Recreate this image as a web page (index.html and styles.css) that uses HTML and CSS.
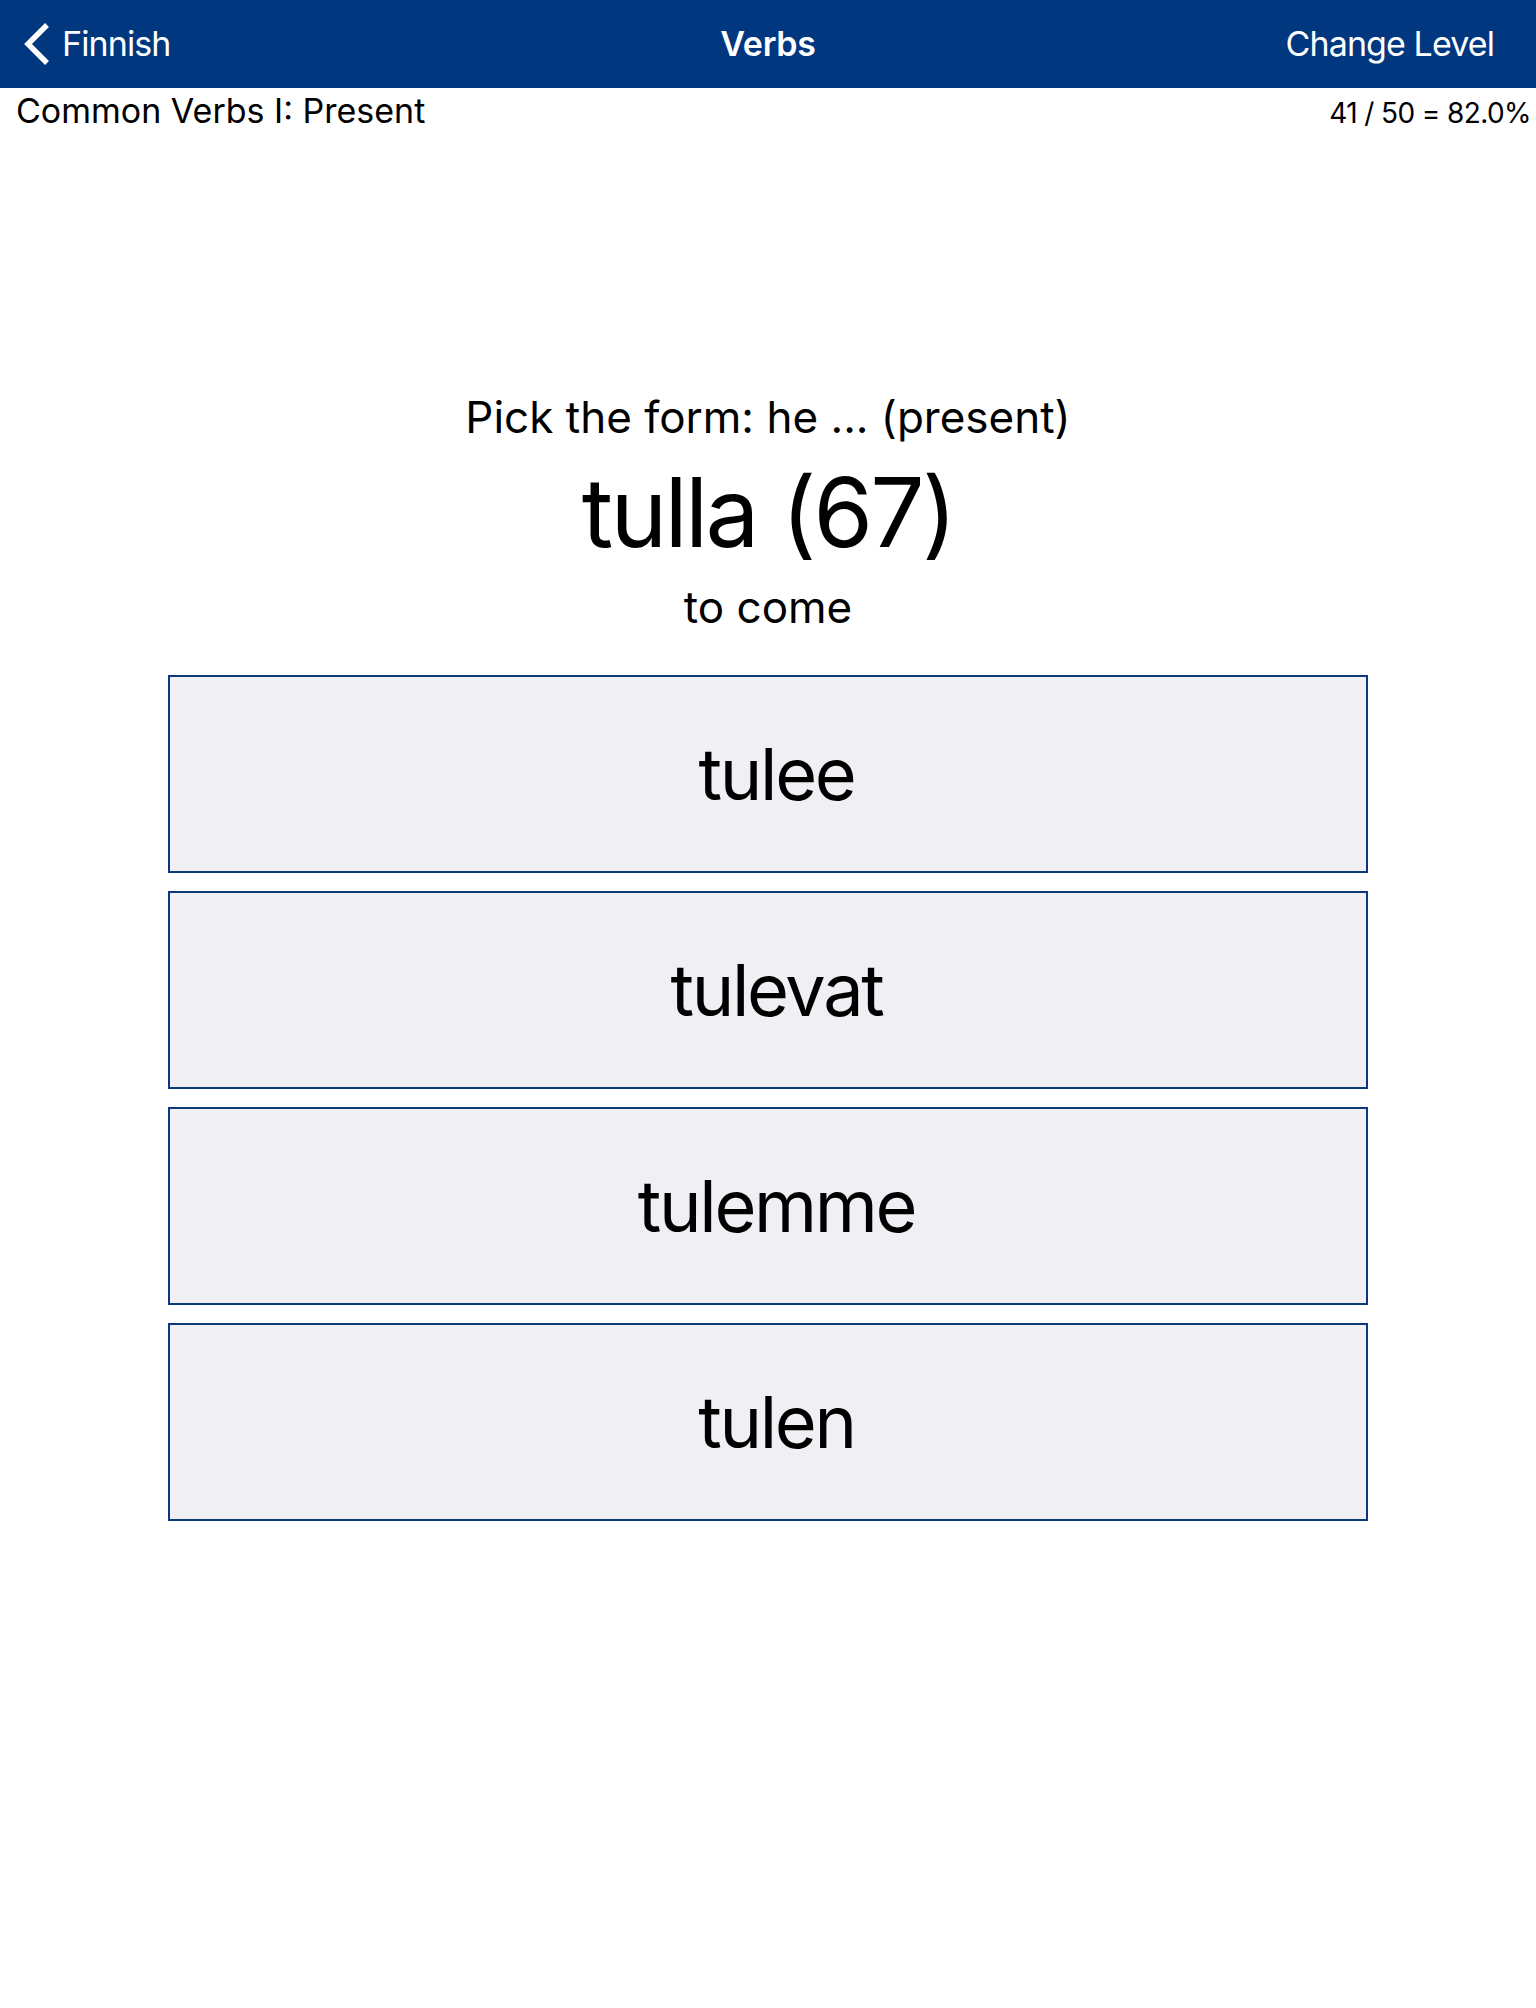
FILE: index.html
```html
<!DOCTYPE html>
<html lang="en">
<head>
<meta charset="utf-8">
<title>Verbs</title>
<link rel="stylesheet" href="styles.css">
</head>
<body>
<header class="nav">
  <div class="nav-left">
    <svg class="chev" width="30" height="44" viewBox="0 0 30 44"><polyline points="23,3 4,22 23,41" fill="none" stroke="#fff" stroke-width="5.5"/></svg>
    <span class="nav-back">Finnish</span>
  </div>
  <div class="nav-title">Verbs</div>
  <div class="nav-right">Change Level</div>
</header>
<div class="subbar">
  <span class="lesson">Common Verbs I: Present</span>
  <span class="score">41 / 50 = 82.0%</span>
</div>
<main class="quiz">
  <div class="prompt">Pick the form: he ... (present)</div>
  <div class="word">tulla (67)</div>
  <div class="meaning">to come</div>
  <div class="choices">
    <div class="choice">tulee</div>
    <div class="choice">tulevat</div>
    <div class="choice">tulemme</div>
    <div class="choice">tulen</div>
  </div>
</main>
</body>
</html>
```
FILE: styles.css
```css
html, body {
  margin: 0;
  padding: 0;
  background: #ffffff;
}
body {
  font-family: Inter, "Liberation Sans", sans-serif;
  color: #000;
  width: 1536px;
  min-height: 2008px;
}
.nav {
  height: 88px;
  background: #00377f;
  color: #fff;
  display: grid;
  grid-template-columns: 1fr auto 1fr;
  align-items: center;
  font-size: 34px;
  line-height: 40px;
  letter-spacing: -0.9px;
}
.nav-left {
  display: flex;
  align-items: center;
  padding-left: 24px;
}
.chev {
  display: block;
  margin-right: 8px;
}
.nav-title {
  font-weight: 600;
  letter-spacing: -0.3px;
}
.nav-right {
  text-align: right;
  padding-right: 42px;
}
.subbar {
  display: flex;
  justify-content: space-between;
  align-items: baseline;
  padding: 3px 5px 0 16px;
  line-height: 40px;
}
.lesson {
  font-size: 34px;
}
.score {
  font-size: 28px;
  letter-spacing: -0.6px;
}
.quiz {
  display: flex;
  flex-direction: column;
  align-items: center;
  padding-top: 258px;
}
.prompt {
  font-size: 44px;
  line-height: 52px;
}
.word {
  font-size: 96px;
  line-height: 110px;
  margin-top: 14px;
  letter-spacing: -2.7px;
}
.meaning {
  font-size: 44px;
  line-height: 52px;
  margin-top: 14px;
}
.choices {
  width: 1200px;
  margin-top: 42px;
  display: flex;
  flex-direction: column;
  gap: 18px;
}
.choice {
  box-sizing: border-box;
  height: 198px;
  border: 2px solid #0b3a7a;
  background: #efeff4;
  display: flex;
  align-items: center;
  justify-content: center;
  padding-left: 17px;
  font-size: 72px;
  line-height: 86px;
  letter-spacing: -2.3px;
}
```
